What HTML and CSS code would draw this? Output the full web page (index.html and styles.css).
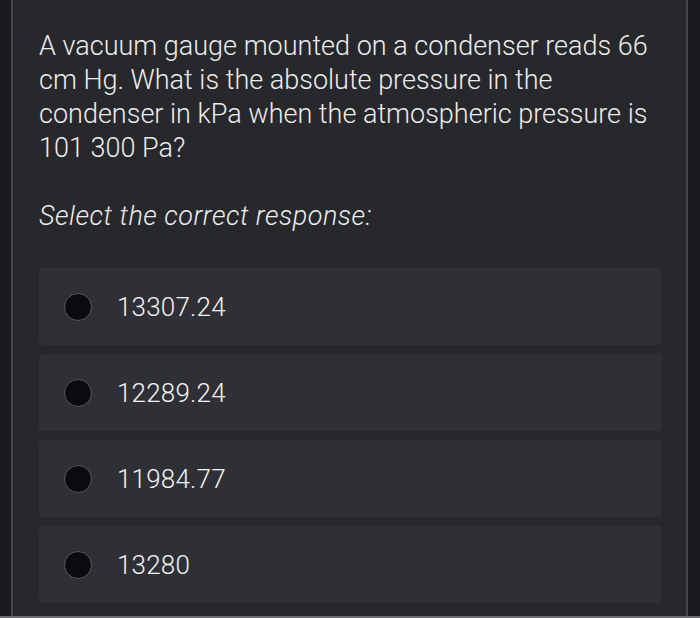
FILE: index.html
```html
<!DOCTYPE html>
<html>
<head>
<meta charset="utf-8">
<link rel="stylesheet" href="styles.css">
</head>
<body>
<div class="screen">
  <div class="panel">
    <p class="question">A vacuum gauge mounted on a condenser reads 66 cm Hg. What is the absolute pressure in the condenser in kPa when the atmospheric pressure is 101 300 Pa?</p>
    <p class="prompt">Select the correct response:</p>
    <div class="options">
      <div class="option"><span class="radio"></span><span class="label">13307.24</span></div>
      <div class="option"><span class="radio"></span><span class="label">12289.24</span></div>
      <div class="option"><span class="radio"></span><span class="label">11984.77</span></div>
      <div class="option"><span class="radio"></span><span class="label">13280</span></div>
    </div>
  </div>
</div>
</body>
</html>
```
FILE: styles.css
```css
html, body {
  margin: 0;
  padding: 0;
  background: #1b1b1f;
}
.screen {
  width: 700px;
  height: 618px;
  display: flex;
  box-sizing: border-box;
  padding-left: 11px;
  padding-right: 12px;
  border-bottom: 2px solid #6b6b70;
  overflow: hidden;
}
.panel {
  flex: 1;
  background: #27282c;
  border-left: 2px solid #45464c;
  border-right: 2px solid #45464c;
  padding: 29px 24px 0 26px;
  font-family: Roboto, "Liberation Sans", sans-serif;
  font-weight: 300;
  color: #ececee;
}
.question {
  margin: 0;
  font-size: 27px;
  line-height: 34px;
  letter-spacing: 0;
}
.prompt {
  margin: 34px 0 0 0;
  font-size: 27px;
  line-height: 34px;
  letter-spacing: 0.5px;
  font-style: italic;
}
.options {
  margin-top: 35px;
  display: flex;
  flex-direction: column;
  gap: 9px;
}
.option {
  height: 77px;
  background: #2f3035;
  border-radius: 4px;
  display: flex;
  align-items: center;
  padding-left: 25px;
  gap: 25px;
}
.radio {
  width: 26px;
  height: 26px;
  border-radius: 50%;
  background: #0b0b0f;
  border: 1px solid #57575c;
  flex: none;
}
.label {
  font-size: 26px;
  letter-spacing: 0.2px;
  color: #f2f2f4;
}
```
